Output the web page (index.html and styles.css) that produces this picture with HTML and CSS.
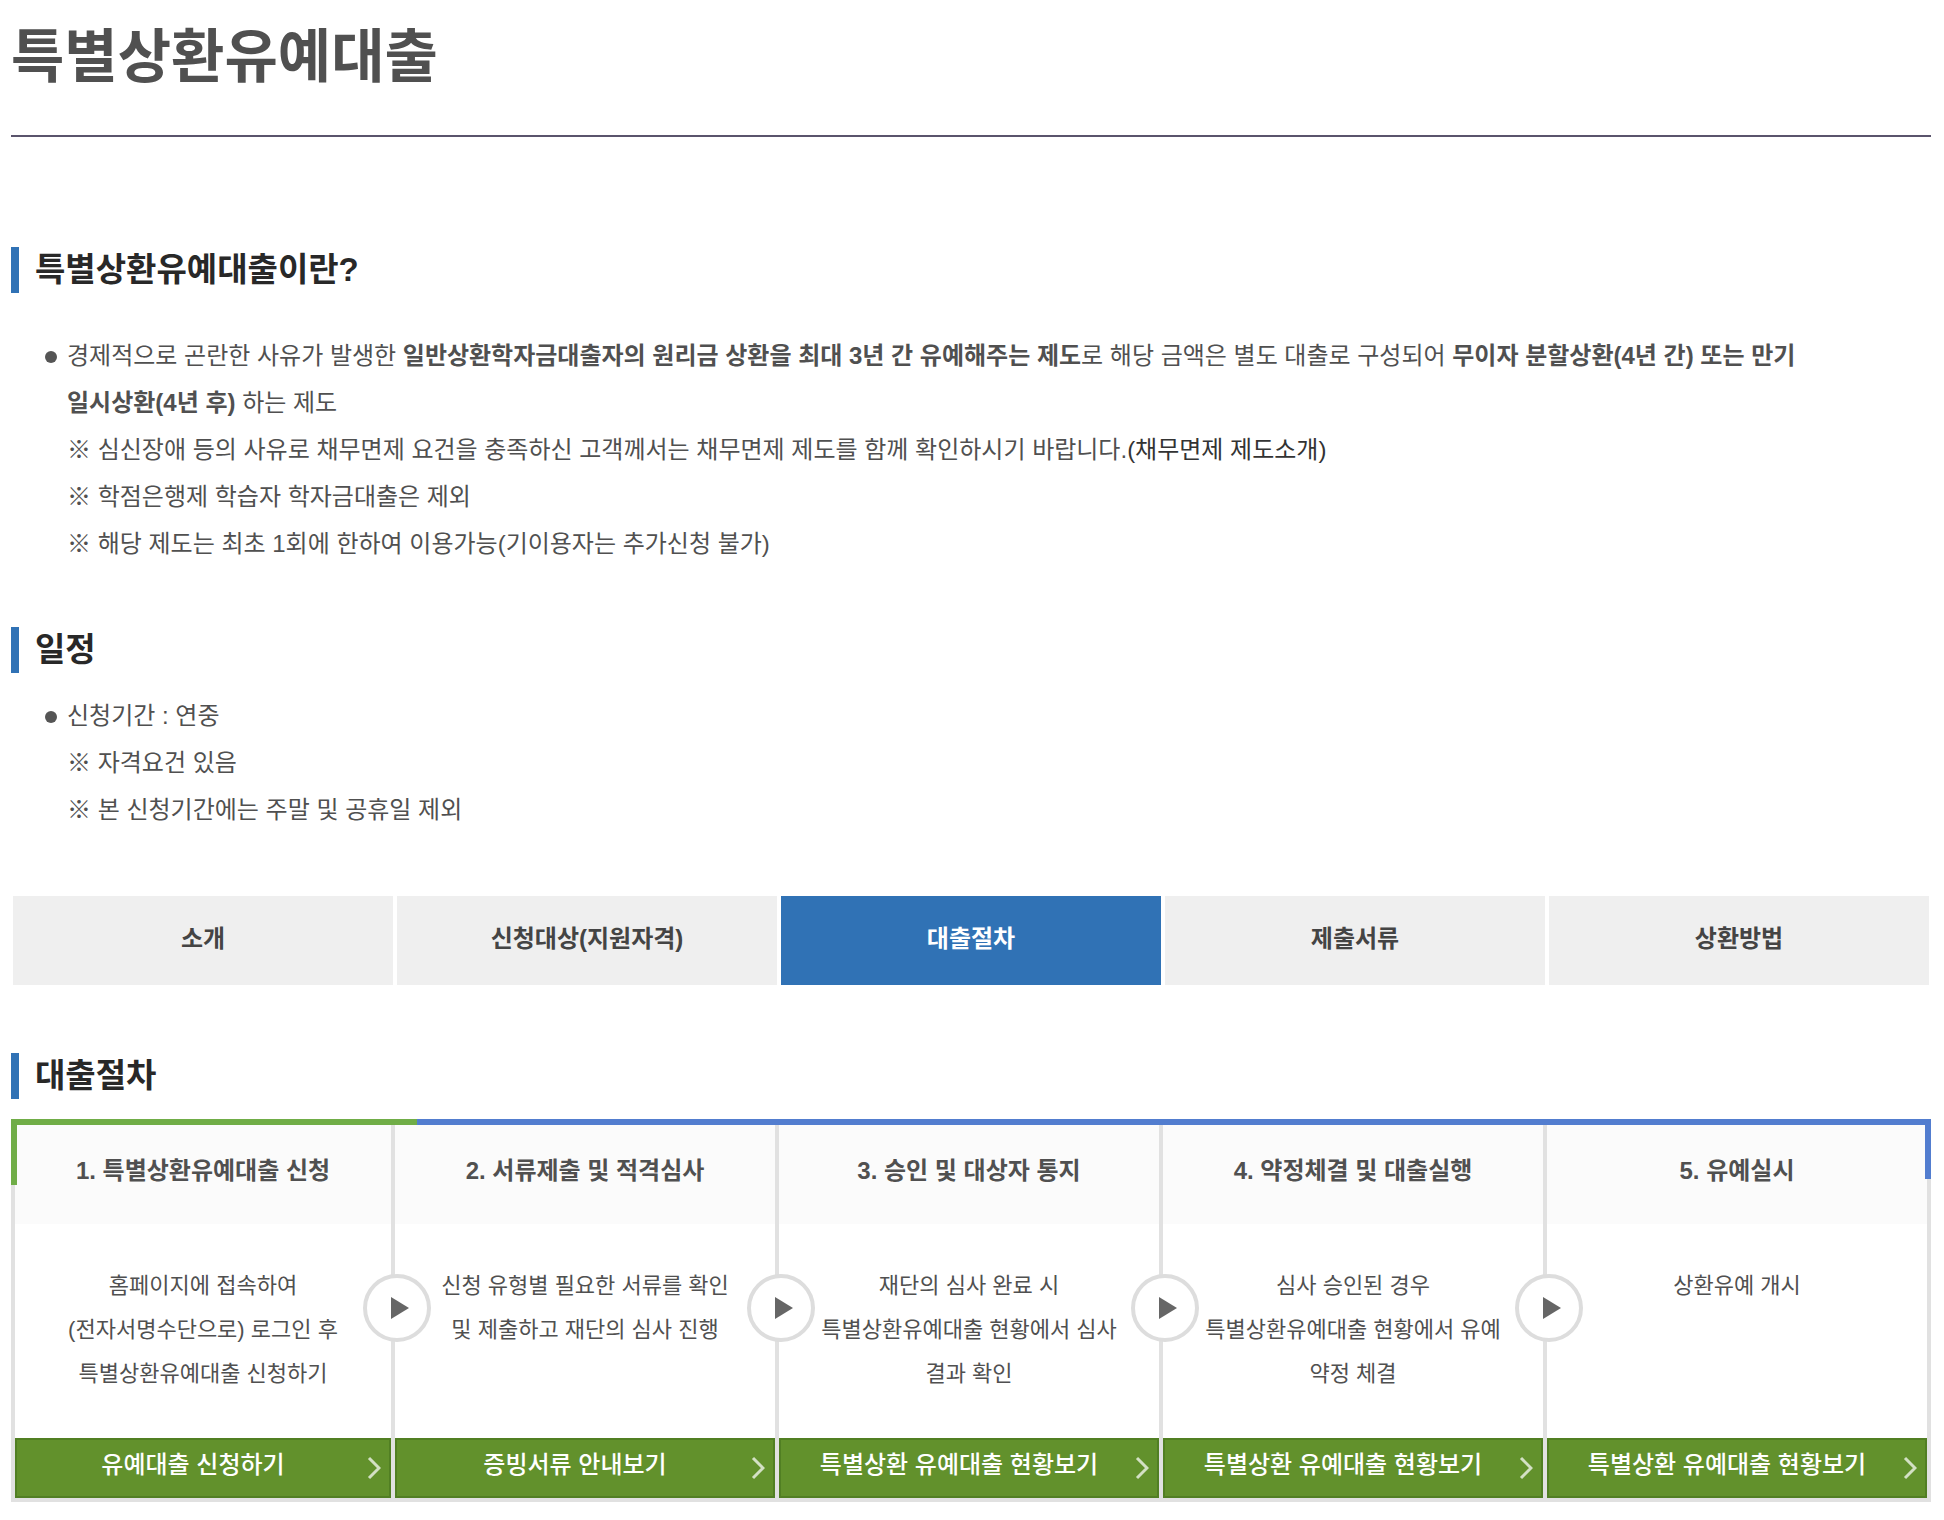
FILE: index.html
```html
<!DOCTYPE html>
<html lang="ko">
<head>
  <meta charset="UTF-8">
  <meta name="viewport" content="width=device-width, initial-scale=1.0">
  <title>특별상환유예대출</title>
  <link rel="stylesheet" href="styles.css">
</head>
<body>
  <div class="container">
    <h1>특별상환유예대출</h1>

    <!-- Intro -->
    <section class="intro">
      <h2>특별상환유예대출이란?</h2>
      <ul class="bullets">
        <li>
          <p>경제적으로 곤란한 사유가 발생한 <strong>일반상환학자금대출자의 원리금 상환을 최대 3년 간 유예해주는 제도</strong>로 해당 금액은 별도 대출로 구성되어 <strong>무이자 분할상환(4년 간) 또는 만기 일시상환(4년 후)</strong> 하는 제도</p>
          <p>※ 심신장애 등의 사유로 채무면제 요건을 충족하신 고객께서는 채무면제 제도를 함께 확인하시기 바랍니다.<a href="#">(채무면제 제도소개)</a></p>
          <p>※ 학점은행제 학습자 학자금대출은 제외</p>
          <p>※ 해당 제도는 최초 1회에 한하여 이용가능(기이용자는 추가신청 불가)</p>
        </li>
      </ul>
    </section>

    <!-- Schedule -->
    <section class="schedule">
      <h2>일정</h2>
      <ul class="bullets">
        <li>
          <p>신청기간 : 연중</p>
          <p>※ 자격요건 있음</p>
          <p>※ 본 신청기간에는 주말 및 공휴일 제외</p>
        </li>
      </ul>
    </section>

    <!-- Tabs -->
    <nav class="tabs">
      <a href="#">소개</a>
      <a href="#">신청대상(지원자격)</a>
      <a href="#" class="active">대출절차</a>
      <a href="#">제출서류</a>
      <a href="#">상환방법</a>
    </nav>

    <!-- Loan steps -->
    <section class="process">
      <h2>대출절차</h2>
      <ol class="steps">
        <li>
          <h3>1. 특별상환유예대출 신청</h3>
          <p>홈페이지에 접속하여<br>(전자서명수단으로) 로그인 후<br>특별상환유예대출 신청하기</p>
          <a href="#" class="go">유예대출 신청하기
            <svg width="14" height="24" viewBox="0 0 14 24"><path d="M2 2L12 12L2 22"/></svg>
          </a>
          <span class="arrow"><svg width="18" height="22" viewBox="0 0 18 22"><path d="M0 0L18 11L0 22Z"/></svg></span>
        </li>
        <li>
          <h3>2. 서류제출 및 적격심사</h3>
          <p>신청 유형별 필요한 서류를 확인<br>및 제출하고 재단의 심사 진행</p>
          <a href="#" class="go">증빙서류 안내보기
            <svg width="14" height="24" viewBox="0 0 14 24"><path d="M2 2L12 12L2 22"/></svg>
          </a>
          <span class="arrow"><svg width="18" height="22" viewBox="0 0 18 22"><path d="M0 0L18 11L0 22Z"/></svg></span>
        </li>
        <li>
          <h3>3. 승인 및 대상자 통지</h3>
          <p>재단의 심사 완료 시<br>특별상환유예대출 현황에서 심사<br>결과 확인</p>
          <a href="#" class="go">특별상환 유예대출 현황보기
            <svg width="14" height="24" viewBox="0 0 14 24"><path d="M2 2L12 12L2 22"/></svg>
          </a>
          <span class="arrow"><svg width="18" height="22" viewBox="0 0 18 22"><path d="M0 0L18 11L0 22Z"/></svg></span>
        </li>
        <li>
          <h3>4. 약정체결 및 대출실행</h3>
          <p>심사 승인된 경우<br>특별상환유예대출 현황에서 유예<br>약정 체결</p>
          <a href="#" class="go">특별상환 유예대출 현황보기
            <svg width="14" height="24" viewBox="0 0 14 24"><path d="M2 2L12 12L2 22"/></svg>
          </a>
          <span class="arrow"><svg width="18" height="22" viewBox="0 0 18 22"><path d="M0 0L18 11L0 22Z"/></svg></span>
        </li>
        <li>
          <h3>5. 유예실시</h3>
          <p>상환유예 개시</p>
          <a href="#" class="go">특별상환 유예대출 현황보기
            <svg width="14" height="24" viewBox="0 0 14 24"><path d="M2 2L12 12L2 22"/></svg>
          </a>
        </li>
      </ol>
    </section>
  </div>
</body>
</html>
```
FILE: styles.css
```css
* {
  box-sizing: border-box;
}
body {
  margin: 0;
  font-family: "Liberation Sans", "Noto Sans CJK KR", sans-serif;
  font-size: 24px;
  color: #505050;
  background: #fff;
  word-break: keep-all;
}
h1, h2, h3, p, ul, ol {
  margin: 0;
  padding: 0;
}
ul, ol {
  list-style: none;
}
a {
  color: #333;
  text-decoration: none;
}
.container {
  padding: 0 13px 16px 11px;
}
h1 {
  padding: 21px 0 42px;
  border-bottom: 2px solid #5a546c;
  font-size: 58px;
  line-height: 72px;
  font-weight: 700;
}
h2 {
  padding-left: 16px;
  border-left: 8px solid #3072b5;
  font-size: 33px;
  line-height: 46px;
  font-weight: 700;
  color: #282828;
}

/* text sections */
.intro {
  padding-top: 110px;
}
.intro .bullets {
  margin-top: 39px;
}
.schedule {
  padding-top: 60px;
}
.schedule .bullets {
  margin-top: 19px;
}
.bullets li {
  position: relative;
  padding: 0 80px 0 56px;
  line-height: 47px;
}
.bullets li::before {
  content: "";
  position: absolute;
  left: 34px;
  top: 19px;
  width: 12px;
  height: 12px;
  border-radius: 50%;
  background: #555;
}

/* tabs */
.tabs {
  display: flex;
  gap: 4px;
  margin-top: 63px;
  padding: 0 2px;
}
.tabs a {
  flex: 1;
  padding: 20px 0 23px;
  background: #efefef;
  color: #444;
  font-size: 24px;
  line-height: 46px;
  font-weight: 700;
  text-align: center;
}
.tabs a.active {
  background: #3072b5;
  color: #fff;
}

/* steps */
.process {
  padding-top: 68px;
}
.steps {
  position: relative;
  display: grid;
  grid-template-columns: repeat(5, 1fr);
  margin-top: 20px;
  padding-top: 6px;
  border-bottom: 4px solid #e1e1e1;
  background: linear-gradient(to right, #70ad47 406px, #527dcf 406px) top / 100% 6px no-repeat;
}
.steps::before,
.steps::after {
  content: "";
  position: absolute;
  z-index: 1;
  top: 0;
  width: 6px;
}
.steps::before {
  left: 0;
  height: 66px;
  background: #70ad47;
}
.steps::after {
  right: 0;
  height: 60px;
  background: #527dcf;
}
.steps li {
  position: relative;
  display: flex;
  flex-direction: column;
  border-right: 4px solid #e1e1e1;
  text-align: center;
}
.steps li:first-child {
  border-left: 4px solid #e1e1e1;
}
.steps h3 {
  padding: 23px 0 30px;
  background: #fbfbfb;
  font-size: 24px;
  line-height: 46px;
  font-weight: 700;
}
.steps p {
  flex: 1;
  padding: 40px 0 42px;
  font-size: 22px;
  line-height: 44px;
}
.steps .go {
  position: relative;
  padding: 2px 20px 8px 0;
  border: 2px solid #517f23;
  background: #62912c;
  color: #fff;
  font-size: 24px;
  line-height: 46px;
  font-weight: 500;
}
.steps .go svg {
  position: absolute;
  right: 8px;
  top: 16px;
  fill: none;
  stroke: #d3e0c4;
  stroke-width: 3;
}
.steps .arrow {
  position: absolute;
  z-index: 1;
  right: -40px;
  top: 149px;
  display: flex;
  align-items: center;
  justify-content: center;
  width: 68px;
  height: 68px;
  padding-left: 6px;
  border: 4px solid #ddd;
  border-radius: 50%;
  background: #fff;
}
.steps .arrow svg {
  fill: #666;
}
```
